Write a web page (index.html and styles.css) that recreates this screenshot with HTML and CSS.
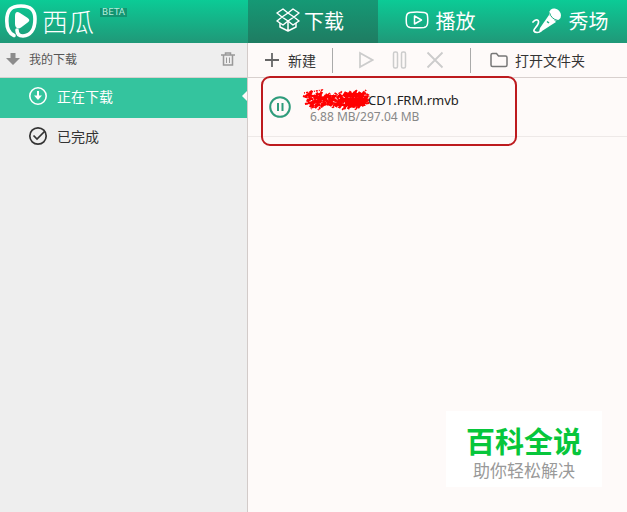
FILE: index.html
```html
<!DOCTYPE html>
<html lang="zh-CN">
<head>
    <meta charset="UTF-8">
    <meta name="viewport" content="width=device-width, initial-scale=1.0">
    <title>西瓜</title>
    <link rel="stylesheet" href="styles.css">
</head>
<body>
    <header class="header">
        <div class="brand">
            <svg class="logo" width="34" height="36" viewBox="0 0 34 36">
                <path d="M10 32.500C4 30 2.800 25 2.800 18C2.800 7 7 3 17 3C27 3 31 7 31 16C31 27 26 32.500 19 33C14 33 13 30 13 27" fill="none" stroke="#fff" stroke-width="3.600" stroke-linecap="round"/>
                <path d="M11 13C11 9 13 8 16 10L23 14.500C26 16.500 26 18 23 20L17 24.500C14 26.500 11 25 11 21Z" fill="#fff"/>
            </svg>
            <h1>西瓜</h1>
            <span class="beta">BETA</span>
        </div>
        <nav class="tabs">
            <button class="tab active">
                <svg width="24" height="24" viewBox="0 0 24 24" fill="none" stroke="#fff" stroke-width="1.5" stroke-linejoin="round">
                    <path d="M7 1L12 5L6 9L1 5ZM17 1L12 5L18 9L23 5ZM6 9L12 13L7 17L1 13ZM18 9L12 13L17 17L23 13Z"/>
                    <path d="M4 15V19L12 23L20 19V15M12 13V23"/>
                </svg>
                下载
            </button>
            <button class="tab play">
                <svg width="24" height="18" viewBox="0 0 24 18" fill="none" stroke="#fff" stroke-width="1.5" stroke-linejoin="round">
                    <path d="M5 1.5Q12 .5 19 1.5Q22.500 2 22.500 5Q23 9 22.500 13Q22 16 19 16.500Q12 17 5 16.500Q2 16 1.500 13Q1 9 1.500 5Q2 2 5 1.500Z"/>
                    <path d="M9.500 5V13L16.500 9Z"/>
                </svg>
                播放
            </button>
            <button class="tab show">
                <svg width="30" height="27" viewBox="0 0 30 27">
                    <path d="M1 15C4 11 8 13 6 17C5 20 1 22 2 24C3 26 7 26 9 24" fill="none" stroke="#fff" stroke-width="1.7" stroke-linecap="round"/>
                    <path d="M17 8L24 15L10 24L7 25L8 21Z" fill="#fff"/>
                    <ellipse cx="23" cy="7.500" rx="5.500" ry="6.500" transform="rotate(-42 23 7.500)" fill="#fff"/>
                    <path d="M17.500 5.500Q19 12 26 13.500" fill="none" stroke="#18ac81" stroke-width="1"/>
                    <path d="M15 14.500L17 16" stroke="#18ac81" stroke-width="1.500"/>
                </svg>
                秀场
            </button>
        </nav>
    </header>

    <div class="content">
        <aside class="sidebar">
            <div class="sidebar-head">
                <svg width="14" height="14" viewBox="0 0 14 14"><path d="M4.500 1H9.500V6H14L7 13L0 6H4.500Z" fill="#8c8c8c"/></svg>
                <h2>我的下载</h2>
                <button class="trash" aria-label="删除">
                    <svg width="14" height="14" viewBox="0 0 14 14" fill="none" stroke="#999" stroke-width="1.500">
                        <path d="M0 3H14M4.500 3V1H9.500V3M2.500 3V13H11.500V3"/>
                        <path d="M5.500 5.500V11M8.500 5.500V11" stroke-width="1"/>
                    </svg>
                </button>
            </div>
            <a class="item selected" href="#">
                <svg width="20" height="20" viewBox="0 0 20 20">
                    <circle cx="10" cy="10" r="8.200" fill="none" stroke="#fff" stroke-width="1.600"/>
                    <path d="M9 5H11V9.500H14L10 14L6 9.500H9Z" fill="#fff"/>
                </svg>
                正在下载
            </a>
            <a class="item" href="#">
                <svg width="20" height="20" viewBox="0 0 20 20" fill="none" stroke="#333" stroke-width="1.700">
                    <circle cx="10" cy="10" r="8.200"/>
                    <path d="M5.500 9.500L9 13L16.500 5.500"/>
                </svg>
                已完成
            </a>
        </aside>

        <main class="main">
            <div class="toolbar">
                <button class="tool new">
                    <svg width="16" height="16" viewBox="0 0 16 16"><path d="M1 8H15M8 1V15" stroke="#666" stroke-width="1.800"/></svg>
                    新建
                </button>
                <div class="controls">
                    <button class="tool" aria-label="开始" disabled>
                        <svg width="16" height="18" viewBox="0 0 16 18"><path d="M2 2V16L14.500 9Z" fill="none" stroke="#ccc" stroke-width="1.700"/></svg>
                    </button>
                    <button class="tool" aria-label="暂停" disabled>
                        <svg width="16" height="18" viewBox="0 0 16 18" fill="none" stroke="#ccc" stroke-width="1.500">
                            <rect x="1.500" y="1" width="4" height="16" rx="1.500"/>
                            <rect x="9.500" y="1" width="4" height="16" rx="1.500"/>
                        </svg>
                    </button>
                    <button class="tool" aria-label="取消" disabled>
                        <svg width="18" height="18" viewBox="0 0 18 18"><path d="M1.500 1.500L16.500 16.500M16.500 1.500L1.500 16.500" stroke="#ccc" stroke-width="1.800"/></svg>
                    </button>
                </div>
                <button class="tool folder">
                    <svg width="18" height="16" viewBox="0 0 18 16"><path d="M1 3Q1 1.500 2.500 1.500H6.500L8.500 4H15.500Q17 4 17 5.500V13Q17 14.500 15.500 14.500H2.500Q1 14.500 1 13Z" fill="none" stroke="#777" stroke-width="1.500"/></svg>
                    打开文件夹
                </button>
            </div>

            <div class="task">
                <button class="pause" aria-label="暂停任务">
                    <svg width="22" height="22" viewBox="0 0 22 22" fill="none" stroke="#2f9c7c" stroke-width="2">
                        <circle cx="11" cy="11" r="9.800"/>
                        <path d="M9 7V15M13.500 7V15"/>
                    </svg>
                </button>
                <div class="info">
                    <div class="name">
                        <svg width="68" height="24" viewBox="0 0 68 24" fill="none" stroke="#f00">
                            <path d="M3 9L10 3L5 14L16 5L8 19L20 4L13 20L25 6L19 19L29 7L25 17L34 5L28 18L39 6L34 19L44 4L37 20L49 3L42 21L54 3L46 21L58 4L51 20L62 4L56 20L66 6L60 18L67 11" stroke-width="2.500" stroke-dasharray="6 1 3 1"/>
                            <path d="M1 8L18 14L3 16L25 10L6 7L31 13L10 18L39 15L24 8L50 8L32 17L61 17L43 5L66 9L42 13L67 15L47 19L64 5" stroke-width="2" stroke-dasharray="5 1"/>
                            <path d="M2 5L20 2L9 21L28 5L16 22L40 3L30 20L55 2L40 22L64 2L53 22L68 7" stroke-width="1.500" stroke-dasharray="1 1 2 1"/>
                            <path d="M38 12H65M43 7H62M43 16H62" stroke-width="4"/>
                        </svg>
                        <span>CD1.FRM.rmvb</span>
                    </div>
                    <div class="size">6.88 MB/297.04 MB</div>
                </div>
                <div class="marker"></div>
            </div>
        </main>
    </div>

    <div class="watermark">
        <strong>百科全说</strong>
        <span>助你轻松解决</span>
    </div>
</body>
</html>
```

FILE: styles.css
```css
* {
    box-sizing: border-box;
}
body {
    margin: 0;
    min-height: 100vh;
    display: flex;
    flex-direction: column;
    font-family: "Noto Sans", "Noto Sans CJK SC", sans-serif;
    font-size: 14px;
    color: #333;
    background-color: #fefaf9;
}
svg {
    display: block;
    flex-shrink: 0;
}
button {
    display: flex;
    align-items: center;
    padding: 0;
    border: none;
    background: none;
    font: inherit;
    color: inherit;
    cursor: pointer;
}
.header {
    display: flex;
    height: 43px;
    color: white;
    background: linear-gradient(#0bcb96, #209878);
}
.brand {
    display: flex;
    align-items: center;
    width: 248px;
    padding: 0 0 2px 4px;
}
.brand h1 {
    margin: 0 6px 0 4px;
    font-size: 26px;
    line-height: 36px;
    font-weight: 300;
    font-family: "Noto Sans CJK SC", sans-serif;
}
.beta {
    align-self: flex-start;
    margin-top: 8px;
    padding: 0 2px;
    font-family: "DejaVu Sans", sans-serif;
    font-size: 9px;
    line-height: 9px;
    color: #b5eedd;
    background-color: #129572;
}
.tabs {
    display: flex;
    flex: 1;
}
.tab {
    flex: 1;
    justify-content: center;
    gap: 7px;
    padding-bottom: 3px;
    font-size: 20px;
    font-family: "Noto Sans CJK SC", sans-serif;
}
.tab.active {
    flex: 0 0 130px;
    gap: 4px;
    padding-right: 6px;
    background: linear-gradient(#159975, #1f7c62);
}
.tab.play {
    padding-left: 5px;
}
.tab.show {
    padding-left: 16px;
}
.content {
    display: flex;
    flex: 1;
}
.sidebar {
    width: 248px;
    border-right: 1px solid #d2cbc9;
    background-color: #eee;
}
.sidebar-head {
    display: flex;
    align-items: center;
    gap: 9px;
    height: 35px;
    padding: 0 12px 2px 6px;
    border-bottom: 1px solid #d8d0ce;
}
.sidebar-head h2 {
    margin: 0;
    font-size: 12px;
    font-weight: normal;
    color: #555;
}
.trash {
    margin-left: auto;
}
.item {
    position: relative;
    display: flex;
    align-items: center;
    gap: 9px;
    height: 40px;
    padding: 0 0 4px 28px;
    color: #333;
    text-decoration: none;
}
.item.selected {
    color: white;
    background-color: #34c49e;
}
.item.selected::after {
    content: "";
    position: absolute;
    right: 0;
    border: 5px solid transparent;
    border-right-color: #fefaf9;
    border-left: none;
}
.main {
    flex: 1;
}
.toolbar {
    display: flex;
    align-items: center;
    height: 35px;
    padding-left: 16px;
    border-bottom: 1px solid #d8d0ce;
}
.tool {
    gap: 8px;
}
.tool.folder {
    gap: 7px;
}
.controls {
    display: flex;
    align-items: center;
    justify-content: center;
    gap: 18px;
    width: 139px;
    height: 25px;
    margin: 0 19px 0 16px;
    padding-right: 2px;
    border-left: 1px solid #aaa;
    border-right: 1px solid #aaa;
}
.task {
    position: relative;
    display: flex;
    align-items: center;
    gap: 11px;
    height: 59px;
    padding-left: 21px;
    border-bottom: 1px solid #eee9e8;
}
.info {
    padding-top: 2px;
}
.name {
    display: flex;
    align-items: center;
    height: 17px;
    font-size: 13px;
    color: #222;
}
.name span {
    margin-left: -2px;
}
.size {
    padding-left: 8px;
    font-size: 12px;
    line-height: 16px;
    color: #888;
}
.marker {
    position: absolute;
    top: -2px;
    left: 13px;
    width: 256px;
    height: 70px;
    border: 2px solid #bd1a1e;
    border-radius: 9px;
    pointer-events: none;
}
.watermark {
    position: absolute;
    right: 25px;
    bottom: 25px;
    display: flex;
    flex-direction: column;
    align-items: center;
    padding: 10px 20px 6px;
    font-family: "Noto Sans CJK SC", sans-serif;
    background-color: white;
}
.watermark strong {
    font-size: 29px;
    line-height: 38px;
    font-weight: 700;
    color: #07c63b;
}
.watermark span {
    font-size: 17px;
    line-height: 22px;
    color: #999;
}
```
